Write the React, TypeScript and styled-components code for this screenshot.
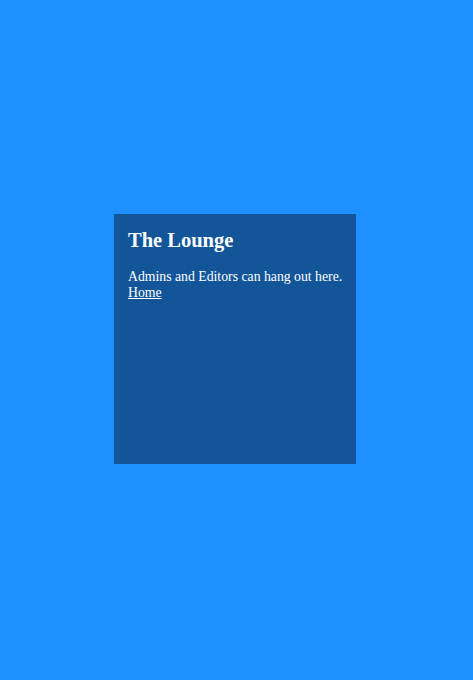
import React from "react";
import styled, { createGlobalStyle } from "styled-components";

const GlobalStyle = createGlobalStyle`
  html, body {
    margin: 0;
    padding: 0;
    height: 100%;
    background-color: #1e90ff;
  }
  #root {
    height: 100%;
  }
`;

const Page = styled.div`
  min-height: 100vh;
  box-sizing: border-box;
  padding: 0 3px 2px 0;
  display: flex;
  align-items: center;
  justify-content: center;
  font-family: "Liberation Serif", "Times New Roman", serif;
  color: #ffffff;
`;

const Card = styled.section`
  width: 242px;
  height: 250px;
  box-sizing: border-box;
  padding: 15px 10px 14px 14px;
  font-size: 13.75px;
  background-color: rgba(0, 0, 0, 0.4);
`;

const Title = styled.h2`
  margin: 0 0 17px;
  font-size: 20.5px;
  font-weight: bold;
`;

const Text = styled.p`
  margin: 0;
`;

const HomeLink = styled.a`
  color: #ffffff;
`;

export default function App() {
  return (
    <>
      <GlobalStyle />
      <Page>
        <Card>
          <Title>The Lounge</Title>
          <Text>Admins and Editors can hang out here.</Text>
          <HomeLink href="#">Home</HomeLink>
        </Card>
      </Page>
    </>
  );
}
